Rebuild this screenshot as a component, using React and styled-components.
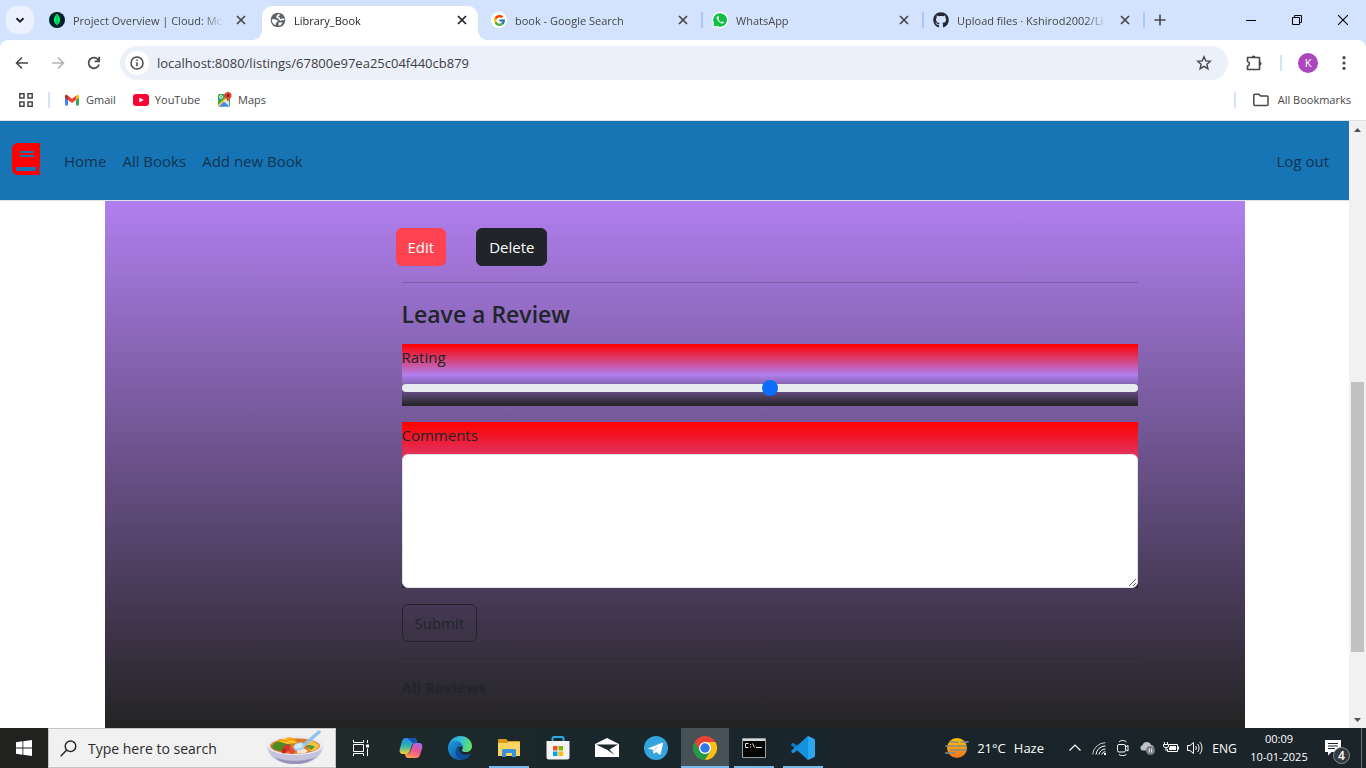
import React from "react";
import styled, { createGlobalStyle, css } from "styled-components";
import { FaBook, FaGithub } from "react-icons/fa";
import { FcGoogle } from "react-icons/fc";

const GlobalStyle = createGlobalStyle`
  * { box-sizing: border-box; }
  body { margin: 0; font-family: "Open Sans", "Noto Sans", sans-serif; color: #212529; }
  button, input, textarea { font: inherit; color: inherit; }
  button { border: 0; padding: 0; background: none; cursor: pointer; }
  a { color: inherit; text-decoration: none; }
  svg { display: block; flex: none; }
`;

/* ---------- window ---------- */
const Screen = styled.div`
  height: 100vh;
  min-height: 480px;
  display: flex;
  flex-direction: column;
  overflow: hidden;
`;

const TabStrip = styled.div`
  display: flex;
  height: 40px;
  flex: none;
  padding: 6px 0 0 6px;
  background: #d3e3fd;
`;

const TabSearch = styled.button`
  width: 28px;
  height: 28px;
  flex: none;
  margin-right: 7px;
  border-radius: 10px;
  background: #ebf1fe;
  display: grid;
  place-items: center;
`;

const TabItem = styled.div`
  position: relative;
  flex: 0 1 221px;
  min-width: 60px;
  display: flex;
  align-items: center;
  gap: 8px;
  height: 28px;
  padding: 0 13px 0 8px;
  font-size: 11px;
  color: #474747;
  ${(p) =>
    p.$divided &&
    css`
      &::after {
        content: "";
        position: absolute;
        right: 1px;
        width: 2px;
        height: 16px;
        background: #a8c7fa;
      }
    `}
  ${(p) =>
    p.$active &&
    css`
      height: 34px;
      color: #1f1f1f;
      padding-bottom: 6px;
      &::before {
        content: "";
        position: absolute;
        z-index: 0;
        inset: 0 5px 0 0;
        border-radius: 10px 10px 0 0;
        background: #fff;
      }
      &::after {
        content: "";
        position: absolute;
        left: -10px;
        right: -5px;
        bottom: 0;
        height: 10px;
        background: radial-gradient(circle at 0 0, transparent 10px, #fff 10px) left / 10px 10px no-repeat,
          radial-gradient(circle at 100% 0, transparent 10px, #fff 10px) right / 10px 10px no-repeat;
      }
      & > * {
        position: relative;
        z-index: 1;
      }
    `}
`;

const TabTitle = styled.span`
  flex: 1;
  min-width: 0;
  margin-top: 2px;
  overflow: hidden;
  white-space: nowrap;
  line-height: 18px;
  mask-image: linear-gradient(90deg, #000 calc(100% - 24px), transparent);
`;

const IconButton = styled.button`
  width: ${(p) => p.$w || 28}px;
  height: ${(p) => p.$h || 28}px;
  flex: none;
  display: grid;
  place-items: center;
`;

const WindowControls = styled.div`
  display: flex;
  margin-left: auto;
`;

const Rule = styled.span`
  width: 2px;
  height: 16px;
  background: #d3e3fd;
`;

const Toolbar = styled.div`
  flex: none;
  display: flex;
  align-items: center;
  height: 46px;
  padding: 0 8px;
  gap: 8px;
  background: linear-gradient(#d3e3fd 50%, #fff 50%);
  position: relative;
  isolation: isolate;
  &::before {
    content: "";
    position: absolute;
    z-index: -1;
    inset: 0;
    background: #fff;
    border-radius: 8px 8px 0 0;
  }
  & > ${Rule} {
    margin: 0 4px;
  }
`;

const Omnibox = styled.div`
  flex: 1;
  display: flex;
  align-items: center;
  height: 34px;
  margin: 0 4px;
  padding: 0 10px 0 5px;
  gap: 8px;
  border-radius: 17px;
  background: #ecf0fa;
`;

const SiteInfo = styled.button`
  width: 24px;
  height: 24px;
  border-radius: 50%;
  background: #fff;
  display: grid;
  place-items: center;
`;

const Address = styled.input`
  flex: 1;
  min-width: 0;
  border: 0;
  padding: 0;
  outline: 0;
  background: none;
  font-size: 13px;
  color: #3c4043;
`;

const Avatar = styled.span`
  width: 20px;
  height: 20px;
  border-radius: 50%;
  background: #ab47bc;
  color: #fff;
  font-size: 11px;
  line-height: 20px;
  text-align: center;
`;

const Bookmarks = styled.nav`
  flex: none;
  display: flex;
  align-items: center;
  height: 35px;
  padding: 0 15px 7px 18px;
  gap: 14px;
  border-bottom: 1px solid #dfe1e5;
  font-size: 11px;
  color: #474747;
`;

const Bookmark = styled.a`
  display: flex;
  align-items: center;
  gap: 6px;
  white-space: nowrap;
  & + & {
    margin-left: 3px;
  }
`;

const Push = styled.div`
  margin-left: auto;
  display: flex;
  align-items: center;
  gap: 16px;
  ${Bookmark} {
    gap: 8px;
  }
`;

/* ---------- web page ---------- */
const Viewport = styled.div`
  flex: 1;
  min-height: 0;
  display: flex;
`;

const Site = styled.div`
  flex: 1;
  min-width: 0;
  display: flex;
  flex-direction: column;
  overflow: hidden;
  font-size: 15px;
  line-height: 24px;
`;

const Navbar = styled.nav`
  flex: none;
  display: flex;
  align-items: center;
  gap: 16px;
  height: 80px;
  padding: 0 20px 0 10px;
  background: #1775b5;
  border-bottom: 1px solid #dee2e6;
`;

const Brand = styled.a`
  color: #f00;
  margin-right: 6px;
  padding-bottom: 4px;
`;

const NavLink = styled.a`
  color: #0f3450;
  padding-top: 1px;
  &:last-child {
    margin-left: auto;
  }
`;

const Container = styled.main`
  flex: 1;
  min-height: 0;
  width: 100%;
  max-width: 1140px;
  margin: 0 auto;
  overflow: hidden;
  background: linear-gradient(#b07fee, #232323);
`;

const Column = styled.div`
  width: 66.667%;
  margin-left: 25%;
  padding: 27px 12px 0;
`;

const Actions = styled.div`
  display: flex;
  gap: 30px;
  margin-left: -6px;
`;

const Button = styled.button`
  height: 38px;
  padding: 0 ${(p) => (p.$kind === "edit" ? 11 : 12)}px;
  border-radius: 6px;
  border: 1px solid #212529;
  ${(p) => p.$kind === "edit" && css`background: #ff424f; border-color: #ff424f; color: #fff;`}
  ${(p) => p.$kind === "dark" && css`background: #212529; color: #fff;`}
`;

const Separator = styled.hr`
  height: 1px;
  margin: 16px 0;
  border: 0;
  background: #212529;
  opacity: 0.25;
`;

const Heading = styled.h4`
  margin: 0 0 14px;
  font-size: 23px;
  line-height: 31px;
  font-weight: 600;
`;

const Field = styled.div`
  display: flex;
  flex-direction: column;
  gap: 6px;
  margin-bottom: 16px;
  padding-bottom: ${(p) => (p.$slider ? 6 : 0)}px;
  background: linear-gradient(#f00, #b07fee, #232323);
`;

const Label = styled.label`
  line-height: 26px;
`;

const Range = styled.input`
  appearance: none;
  width: 100%;
  height: 24px;
  margin: 0;
  background: none;
  &::-webkit-slider-runnable-track {
    height: 8px;
    border-radius: 8px;
    background: #e9ecef;
  }
  &::-webkit-slider-thumb {
    appearance: none;
    width: 16px;
    height: 16px;
    margin-top: -4px;
    border-radius: 50%;
    background: #0d6efd;
  }
`;

const TextArea = styled.textarea`
  width: 100%;
  height: 134px;
  padding: 6px 12px;
  border: 1px solid #dee2e6;
  border-radius: 6px;
  background: #fff;
  resize: vertical;
  outline: 0;
`;

const Reviews = styled.h5`
  margin: 0;
  font-size: 15px;
  line-height: 24px;
  font-weight: 700;
`;

const ScrollBar = styled.div`
  width: 17px;
  flex: none;
  display: flex;
  flex-direction: column;
  background: #f1f1f1;
`;

const ScrollTrack = styled.div`
  flex: 1;
  display: grid;
  grid-template-rows: 244fr 270fr 59fr;
  padding: 0 2px;
`;

const ScrollThumb = styled.div`
  grid-row: 2;
  background: #c1c1c1;
`;

/* ---------- taskbar ---------- */
const Taskbar = styled.footer`
  flex: none;
  display: flex;
  height: 40px;
  color: #fff;
  background: linear-gradient(90deg, #22211f 0, #1e2a29 25%, #19262b 50%, #19242a 75%, #1b2529);
`;

const SearchBox = styled.label`
  flex: 0 1 288px;
  min-width: 0;
  display: flex;
  align-items: center;
  gap: 11px;
  padding: 0 11px;
  border: 1px solid #c4c4c4;
  background: #f1f1f1;
  color: #222;
`;

const SearchInput = styled.input`
  flex: 1;
  min-width: 0;
  border: 0;
  padding: 0;
  background: none;
  outline: 0;
  font-size: 14px;
  &::placeholder {
    color: #2b2b2b;
    opacity: 1;
  }
`;

const TaskButtons = styled.div`
  display: flex;
  gap: 1px;
`;

const TaskButton = styled.button`
  width: ${(p) => p.$w || 48}px;
  display: grid;
  place-items: center;
  background: ${(p) => (p.$focused ? "#485256" : "none")};
  ${(p) =>
    p.$running &&
    css`
      background-image: linear-gradient(#76b9ed, #76b9ed);
      background-size: ${p.$focused ? "48px" : "40px"} 2px;
      background-position: bottom;
      background-repeat: no-repeat;
    `}
`;

const Tray = styled.div`
  margin-left: auto;
  display: flex;
  align-items: center;
  white-space: nowrap;
`;

const Weather = styled.button`
  display: flex;
  align-items: center;
  gap: 8px;
  margin-right: 19px;
  font-size: 13px;
`;

const Language = styled.button`
  width: 35px;
  font-size: 12px;
`;

const Clock = styled.time`
  display: flex;
  flex-direction: column;
  width: 72px;
  margin-left: 1px;
  font-size: 11px;
  line-height: 18px;
  text-align: center;
`;

const Notifications = styled.button`
  position: relative;
  width: 36px;
  height: 40px;
  display: grid;
  place-items: center;
`;

const Badge = styled.span`
  position: absolute;
  left: 18px;
  top: 19px;
  width: 17px;
  height: 17px;
  border: 1px solid #8a9094;
  border-radius: 50%;
  background: #33393c;
  font-size: 12px;
  font-weight: 600;
  line-height: 15px;
`;

const ShowDesktop = styled.button`
  align-self: stretch;
  width: 5px;
  margin-left: 10px;
  border-left: 1px solid #687074;
`;

/* ---------- icons ---------- */
const Line = ({ s = 16, d, w = 2, c = "currentColor", box = 16, cap = "butt" }) => (
  <svg width={s} height={s} viewBox={`0 0 ${box} ${box}`} fill="none" stroke={c} strokeWidth={w} strokeLinecap={cap}>
    <path d={d} />
  </svg>
);

const CloseIcon = () => <Line d="M4 4l8 8M12 4l-8 8" w={1.7} />;

const MongoIcon = () => (
  <svg width="16" height="16" viewBox="0 0 16 16">
    <circle cx="8" cy="8" r="8" fill="#001e2b" />
    <path d="M8 1.800C5.800 4 4.800 6 4.900 8.200 5 10.300 6.300 11.800 7.600 12.700L8 14.300l.4-1.600c1.300-.9 2.600-2.400 2.700-4.500C11.200 6 10.200 4 8 1.800z" fill="#00ed64" />
    <path d="M8 3v10" stroke="#00a35c" strokeWidth=".8" />
  </svg>
);

const GlobeIcon = () => (
  <svg width="16" height="16" viewBox="0 0 16 16">
    <circle cx="8" cy="8" r="7.300" fill="#5f6368" />
    <path d="M9.500 2.200c-.3 1-2.700 1.200-2.500 2.600.1.900 1.300.7 1.900 1.100.8.500.3 1.700 1.300 1.900 1.100.3 1.900-.8 3.200-.6l1 .3" fill="none" stroke="#fff" strokeWidth="1.600" />
    <path d="M1.800 7.300c2 .2 4-.2 5.300.6 1 .7.400 2-.5 2.400-.8.400-.9 1.400-.8 2.700l-1.600-.6C2.600 11.300 1.800 9.500 1.800 7.300z" fill="#fff" />
    <path d="M8.500 10.800l2.600-.6 1.400.9-2.300 2.300-1.700.2z" fill="#fff" />
  </svg>
);

const GoogleTile = styled.span`
  width: 16px;
  height: 16px;
  flex: none;
  border-radius: 50%;
  background: #fff;
  display: grid;
  place-items: center;
`;

const WhatsAppIcon = () => (
  <svg width="16" height="16" viewBox="0 0 16 16">
    <path d="M8 0a8 8 0 0 0-7 11.800L0 16l4.300-1A8 8 0 1 0 8 0z" fill="#fff" />
    <path d="M8 1.200a6.800 6.800 0 0 0-5.800 10.300l-.8 3 3.100-.8A6.800 6.800 0 1 0 8 1.200z" fill="#0fc143" />
    <path d="M5.500 4.200c-.9.500-1.200 1.700-.6 2.900 1 2.200 2.600 3.700 4.600 4.400 1 .3 2.200-.2 2.400-1.300l-1.800-1-.9 1C7.800 9.600 6.900 8.600 6.300 7.200l.8-.9-.7-2z" fill="#fff" />
  </svg>
);

const GmailIcon = () => (
  <svg width="16" height="16" viewBox="0 0 16 16">
    <path d="M1 4v8.500c0 .6.400 1 1 1h2V7z" fill="#4285f4" />
    <path d="M15 4v8.500c0 .6-.4 1-1 1h-2V7z" fill="#34a853" />
    <path d="M1 4.500v1.300L4 8V4L3.200 3C2.300 2.300 1 3 1 4.500z" fill="#c5221f" />
    <path d="M15 4.500v1.300L12 8V4l.8-1c.9-.7 2.200 0 2.200 1.500z" fill="#fbbc04" />
    <path d="M4 3.700v4.200l4 3 4-3V3.700l-4 3z" fill="#ea4335" />
  </svg>
);

const YouTubeIcon = () => (
  <svg width="16" height="12" viewBox="0 0 16 12">
    <rect width="16" height="12" rx="3" fill="#f03" />
    <path d="M6.300 3.400v5.200L10.800 6z" fill="#fff" />
  </svg>
);

const MapsIcon = () => (
  <svg width="15" height="16" viewBox="0 0 15 16">
    <rect x="1" y="2" width="12" height="12.500" rx="1.500" fill="#34a853" />
    <path d="M1 13.500L12 3v11H2z" fill="#e8eaed" />
    <path d="M2 14.500l5-5 5.500 5z" fill="#4285f4" />
    <path d="M1.300 13.500L12 3" stroke="#fbbc04" strokeWidth="1.500" />
    <circle cx="4" cy="5" r="1.400" fill="none" stroke="#fff" strokeWidth=".9" />
    <path d="M11 0a3.600 3.600 0 0 0-3.600 3.600C7.400 6.200 10.500 7 11 10.500 11.500 7 14.600 6.200 14.600 3.600A3.600 3.600 0 0 0 11 0z" fill="#ea4335" />
    <circle cx="11" cy="3.600" r="1.300" fill="#7b1510" />
  </svg>
);

const BowlIcon = () => (
  <svg width="58" height="36" viewBox="0 0 58 36">
    <path d="M1 15c1 11 9 19 28 19s27-8 28-19z" fill="#c5c2dc" />
    <path d="M9 27c4 5 11 7 20 7s16-2 20-7c-10 5-30 5-40 0z" fill="#9794b8" />
    <ellipse cx="29" cy="15.500" rx="28" ry="9.500" fill="#e9e8f5" />
    <ellipse cx="29" cy="16" rx="25" ry="7.800" fill="#dc7b25" />
    <path d="M6 17c2-6 8-7 14-6l5 4-9 6c-5 0-9-1-10-4z" fill="#4d8c23" />
    <path d="M11 11c3-4 7-1 9-3s6-1 9 1l2 4c-6 0-9 2-13 0z" fill="#fbc02d" />
    <path d="M12 11c4-3 6 2 10-1s6 1 8 1" fill="none" stroke="#f08a00" strokeWidth="1.200" />
    <path d="M39 12c4-3 11 0 14 3 0 4-5 6-9 6z" fill="#f6c343" />
    <path d="M40 16c3-2 7-1 9 1l-4 3z" fill="#549a2c" />
    <circle cx="21" cy="18" r="3.500" fill="#d9362b" />
    <circle cx="26" cy="21" r="3" fill="#e54b35" />
    <circle cx="18" cy="21" r="2.500" fill="#c6281f" />
    <path d="M31 20c3-3 8-2 11 1-3 3-8 3-11 2z" fill="#fbe3d2" />
    <path d="M53 2L38 15" stroke="#8fc3ec" strokeWidth="3.500" strokeLinecap="round" />
    <ellipse cx="33" cy="16.500" rx="6" ry="4" transform="rotate(-18 33 16.500)" fill="#a9d0f0" />
    <ellipse cx="32.500" cy="16" rx="4" ry="2.300" transform="rotate(-18 32.500 16)" fill="#d6eafa" />
  </svg>
);

const WindowsIcon = () => (
  <svg width="16" height="16" viewBox="0 0 16 16" fill="#fff">
    <path d="M0 2.200l6.500-.9v6.200H0zM7.300 1.200L16 0v7.500H7.300zM0 8.400h6.500v6.300L0 13.800zM7.300 8.400H16V16l-8.700-1.200z" />
  </svg>
);

const TaskViewIcon = () => (
  <svg width="18" height="16" viewBox="0 0 18 16" fill="none" stroke="#fff">
    <path d="M1.500 0v2.500h10V0M1.500 16v-2.500h10V16M1.500 4.500h10v7h-10zM15.500 0v3M15.500 8.500V16" />
    <path d="M14 4.500h3v3h-3z" fill="#fff" stroke="none" />
  </svg>
);

const CopilotIcon = () => (
  <svg width="24" height="24" viewBox="0 0 24 24">
    <defs>
      <linearGradient id="cpA" x1="0" y1="0" x2="0" y2="1">
        <stop offset="0" stopColor="#1d8bea" />
        <stop offset=".5" stopColor="#2fb5b0" />
        <stop offset="1" stopColor="#f5cf2e" />
      </linearGradient>
      <linearGradient id="cpB" x1=".7" y1="0" x2=".3" y2="1">
        <stop offset="0" stopColor="#a964e8" />
        <stop offset=".5" stopColor="#f0568e" />
        <stop offset="1" stopColor="#ff9a48" />
      </linearGradient>
    </defs>
    <path d="M7 2h8c1.800 0 2.300 1.200 2.800 3l.7 2h-2.600c-1.800 0-2.600.8-3.200 2.700l-1.700 5C10.300 16.800 9.400 18 7.400 18H4c-3 0-3.800-2.300-3.200-5L3 5c.6-2 1.900-3 4-3z" fill="url(#cpA)" />
    <path d="M8.500 2H15c1.800 0 2.300 1.200 2.800 3l.7 2h-5z" fill="#1652b8" />
    <path d="M17 22H9c-1.800 0-2.300-1.200-2.800-3l-.4-1h2.500c1.800 0 2.600-.8 3.200-2.700l1.700-5C13.900 8.200 14.600 7 16.600 7H20c3 0 3.800 2.300 3.200 5L21 19c-.6 2-1.900 3-4 3z" fill="url(#cpB)" />
  </svg>
);

const EdgeIcon = () => (
  <svg width="24" height="24" viewBox="0 0 24 24">
    <defs>
      <linearGradient id="edA" x1="0" y1=".3" x2="1" y2=".5">
        <stop offset="0" stopColor="#2499df" />
        <stop offset=".5" stopColor="#35c1d8" />
        <stop offset="1" stopColor="#68e060" />
      </linearGradient>
      <linearGradient id="edB" x1="0" y1="0" x2="1" y2="1">
        <stop offset="0" stopColor="#1b9de2" />
        <stop offset="1" stopColor="#0b4f9c" />
      </linearGradient>
    </defs>
    <path d="M0 12C.5 5 5.500 0 12.200 0 19 0 24 4.500 24 10.200c0 3.800-2.900 5.900-6 5.900-3 0-4.200-1-4.200-1.600 0-.6 1-1 1-2.900C14.800 8.500 11.800 6 8 6c-4 0-7 2.500-8 6z" fill="url(#edA)" />
    <path d="M0 12c0-4 3.800-7 8-7 4.200 0 6.800 3 6.800 6.300C12 9.500 7.800 10.800 7.800 15.500c0 4.500 3.700 8 8.200 8-1.200.4-2.600.5-4 .5C5 24 0 18.500 0 12z" fill="url(#edB)" />
    <path d="M7.800 15.500c0-2.500 1.500-4.200 3.400-4.700-1 3.700 1.500 8 6.300 8 2.500 0 4-.9 4.700-.9.500 0 .5.500.2.900-1.500 2.300-3.700 4-6.400 4.700-4.500 0-8.200-3.500-8.200-8z" fill="#104d99" />
  </svg>
);

const FolderAppIcon = () => (
  <svg width="22" height="18" viewBox="0 0 22 18">
    <path d="M0 1c0-.6.400-1 1-1h7l2 2h11c.6 0 1 .4 1 1v5H0z" fill="#d79a19" />
    <path d="M0 4h9l2-1h10c.6 0 1 .4 1 1v13H0z" fill="#fcd462" />
    <path d="M4 18v-6.500c0-.8.600-1.500 1.500-1.500h11c.9 0 1.500.7 1.500 1.500V18h-4v-4H8v4z" fill="#3992dc" />
  </svg>
);

const StoreIcon = () => (
  <svg width="24" height="24" viewBox="0 0 24 24">
    <path d="M6.500 6V2.500C6.500 1.700 7.200 1 8 1h8c.8 0 1.500.7 1.500 1.500V6" fill="none" stroke="#29a9e8" strokeWidth="2" />
    <path d="M.5 5h23v16a2.500 2.500 0 0 1-2.500 2.500H3A2.500 2.500 0 0 1 .5 21z" fill="#f2f3f5" />
    <path d="M7 10h4.500v4.500H7z" fill="#f25022" />
    <path d="M12.500 10H17v4.500h-4.500z" fill="#7fba00" />
    <path d="M7 15.500h4.500V20H7z" fill="#00a4ef" />
    <path d="M12.500 15.500H17V20h-4.500z" fill="#ffb900" />
  </svg>
);

const MailIcon = () => (
  <svg width="24" height="20" viewBox="0 0 24 20">
    <path d="M0 6l12-6 12 6v13H0z" fill="#fff" />
    <path d="M1 6.500h22l-8.500 5 5 5.500L12.500 12z" fill="#1b272b" />
  </svg>
);

const TelegramIcon = () => (
  <svg width="24" height="24" viewBox="0 0 24 24">
    <circle cx="12" cy="12" r="12" fill="#34a4df" />
    <path d="M4.500 12.200L18 6.800c.7-.3 1.200.1 1 1l-2.200 10c-.2.800-.7 1-1.300.6l-3.400-2.500-1.700 1.700c-.4.300-.8.200-.9-.3l-1-3.600-3.900-1c-.6-.1-.6-.3-.1-.5z" fill="#fff" />
    <path d="M9 13.500l7-4.500-5.500 5.500-.3 2.500z" fill="#b9dbee" />
  </svg>
);

const ChromeIcon = () => (
  <svg width="24" height="24" viewBox="0 0 24 24">
    <path d="M12 12L1.600 6A12 12 0 0 1 22.400 6z" fill="#ea4335" />
    <path d="M12 12L1.600 6A12 12 0 0 0 12 24l5.200-9z" fill="#249a48" />
    <path d="M12 6h10.400A12 12 0 0 1 12 24l5.200-9z" fill="#fbc116" />
    <path d="M12 6H1.600L6.800 15 12 12z" fill="#ea4335" />
    <path d="M1.600 6L6.800 15 12 18l-4 3z" fill="#249a48" />
    <circle cx="12" cy="12" r="6" fill="#fff" />
    <circle cx="12" cy="12" r="4.700" fill="#2f78ee" />
  </svg>
);

const TerminalIcon = () => (
  <svg width="24" height="20" viewBox="0 0 24 20">
    <path d="M.5.500h23v19H.5z" fill="#050505" stroke="#9a9fa3" />
    <path d="M1 1h22v2H1z" fill="#d5d7d9" />
    <path d="M6.500 5.500h-3v4h3M8.500 6v1M8.500 8.500v1M10.500 5.500l2 4M14 9.500h6" fill="none" stroke="#e2e2e2" />
  </svg>
);

const CodeIcon = () => (
  <svg width="24" height="24" viewBox="0 0 24 24">
    <path d="M17 0L6.500 10 2.300 6.700.300 7.700v1.500L17 24V17.500z" fill="#0b79c4" />
    <path d="M17 24L6.500 14l-4.200 3.300-2-1v-1.500L17 0v6.500z" fill="#1390de" />
    <path d="M17 0l6 2.800c.6.300 1 .8 1 1.500v15.400c0 .7-.4 1.200-1 1.500L17 24z" fill="#2ba7f2" />
  </svg>
);

const HazeIcon = () => (
  <svg width="24" height="22" viewBox="0 0 24 22">
    <defs>
      <linearGradient id="hz" x1="0" y1="0" x2="0" y2="1">
        <stop offset="0" stopColor="#ffc700" />
        <stop offset="1" stopColor="#f4711f" />
      </linearGradient>
    </defs>
    <circle cx="12" cy="11" r="10" fill="url(#hz)" />
    <path d="M5 5h8M16 5h7M1 9h9M12 9h9M6 13h15M0 16h10" stroke="#7d8a91" strokeWidth="1.700" strokeLinecap="round" />
  </svg>
);

const WifiIcon = () => (
  <svg width="14" height="14" viewBox="0 0 14 14" fill="none" stroke="#fff">
    <path d="M.7 13.500A12.800 12.800 0 0 1 13.500 1.700" opacity=".75" />
    <path d="M4 13.500a9.500 9.500 0 0 1 9.500-8.600M7 13.500A6.500 6.500 0 0 1 13.500 8M9.700 13.500a3.800 3.800 0 0 1 3.800-2.800" />
    <path d="M12 12h2v2h-2z" fill="#fff" stroke="none" />
  </svg>
);

const MeetIcon = () => (
  <svg width="14" height="16" viewBox="0 0 14 16" fill="none" stroke="#fff">
    <rect x="1.500" y="4.500" width="8" height="7.500" rx="1.500" />
    <path d="M9.500 7l2.500-1.500v5.500L9.500 9.500M3 2C5 0 8.500 0 10.500 2M3 14.500c2 1.500 5.500 1.500 7.500 0" />
  </svg>
);

const CloudIcon = () => (
  <svg width="16" height="14" viewBox="0 0 16 14">
    <path d="M3 9.500A3 3 0 0 1 3.500 4 4.500 4.500 0 0 1 12 4c2 0 3 1.500 3 3v2.500z" fill="#bfc3c5" />
    <circle cx="11.500" cy="9.500" r="4.500" fill="#777c7f" />
    <path d="M10.300 7.500v4M12.700 7.500v4" stroke="#fff" />
  </svg>
);

const BatteryIcon = () => (
  <svg width="16" height="12" viewBox="0 0 16 12">
    <path d="M6 2.500h8.500v7H4.500V7M15.500 4.500v3" fill="none" stroke="#fff" />
    <path d="M7 4h6v4H6V6z" fill="#fff" />
    <path d="M1.500 0v2M4.500 0v2M.5 2.500h5v2L4 5.500H2L.5 4.500zM3 5.500V9" fill="none" stroke="#fff" />
  </svg>
);

const VolumeIcon = () => (
  <svg width="17" height="14" viewBox="0 0 17 14" fill="none" stroke="#fff">
    <path d="M.5 4.500H3L6.500 1.500v11L3 9.500H.5zM8.500 5c1 1 1 3 0 4M10.500 3c2 2 2 6 0 8M12.700 1c3 3.500 3 8.500 0 12" />
  </svg>
);

const MessageIcon = () => (
  <svg width="16" height="16" viewBox="0 0 16 16">
    <path d="M0 0h16v12H6.500L3 15.500V12H0z" fill="#fff" />
    <path d="M3 3.500h10M3 6h10M3 8.500h7" stroke="#1b2529" />
  </svg>
);

/* ---------- data ---------- */
const TABS = [
  { title: "Project Overview | Cloud: Mc", icon: <MongoIcon /> },
  { title: "Library_Book", icon: <GlobeIcon />, active: true },
  { title: "book - Google Search", icon: <GoogleTile><FcGoogle size={13} /></GoogleTile>, divided: true },
  { title: "WhatsApp", icon: <WhatsAppIcon />, divided: true },
  { title: "Upload files · Kshirod2002/Li", icon: <FaGithub size={16} color="#24292f" />, divided: true },
];

const APPS = [
  { name: "Copilot", icon: <CopilotIcon /> },
  { name: "Edge", icon: <EdgeIcon /> },
  { name: "File Explorer", icon: <FolderAppIcon />, running: true },
  { name: "Store", icon: <StoreIcon /> },
  { name: "Mail", icon: <MailIcon /> },
  { name: "Telegram", icon: <TelegramIcon /> },
  { name: "Chrome", icon: <ChromeIcon />, running: true, focused: true },
  { name: "Command Prompt", icon: <TerminalIcon />, running: true },
  { name: "Visual Studio Code", icon: <CodeIcon />, running: true },
];

function Browser() {
  return (
    <>
      <TabStrip>
        <TabSearch aria-label="Search tabs"><Line s={12} box={12} d="M2.500 4.200L6 7.700l3.500-3.500" /></TabSearch>
        {TABS.map((t) => (
          <TabItem key={t.title} $active={t.active} $divided={t.divided}>
            {t.icon}
            <TabTitle>{t.title}</TabTitle>
            <IconButton $w={16} $h={16} aria-label="Close tab"><CloseIcon /></IconButton>
          </TabItem>
        ))}
        <IconButton aria-label="New tab"><Line d="M8 2.500v11M2.500 8h11" w={1.600} c="#474747" /></IconButton>
        <WindowControls>
          <IconButton $w={46} aria-label="Minimize"><Line s={10} box={10} d="M0 5.500h10" w={1} c="#000" /></IconButton>
          <IconButton $w={46} aria-label="Restore"><Line s={10} box={10} d="M.5 2.500h7v7h-7zM2.500 2.500v-2h7v7h-2" w={1} c="#000" /></IconButton>
          <IconButton $w={46} aria-label="Close"><Line s={10} box={10} d="M0 0l10 10M10 0L0 10" w={1.100} c="#000" /></IconButton>
        </WindowControls>
      </TabStrip>

      <Toolbar>
        <IconButton aria-label="Back"><Line d="M14 8H3M8 2.500L2.500 8 8 13.500" w={1.600} c="#474747" /></IconButton>
        <IconButton aria-label="Forward"><Line d="M2 8h11M8 2.500L13.500 8 8 13.500" w={1.600} c="#b4b4b4" /></IconButton>
        <IconButton aria-label="Reload"><Line d="M13 9.500A5.300 5.300 0 1 1 12.300 5M13.200 1.800v4.500H8.700" w={1.700} c="#474747" /></IconButton>
        <Omnibox>
          <SiteInfo aria-label="Site information">
            <svg width="14" height="14" viewBox="0 0 14 14" fill="none" stroke="#474747" strokeWidth="1.500">
              <circle cx="7" cy="7" r="6" />
              <path d="M7 6.200v4M7 3.600v1.500" />
            </svg>
          </SiteInfo>
          <Address aria-label="Address" defaultValue="localhost:8080/listings/67800e97ea25c04f440cb879" />
          <IconButton aria-label="Bookmark">
            <Line d="M8 1.800l1.800 4.100 4.500.4-3.400 3 1 4.400L8 11.400l-3.900 2.300 1-4.400-3.400-3 4.500-.4z" w={1.400} c="#474747" />
          </IconButton>
        </Omnibox>
        <IconButton aria-label="Extensions">
          <svg width="18" height="18" viewBox="0 0 18 18">
            <path d="M2.500 3.500h12v12h-12v-3.500c2.500-.5 2.500-4 0-4.500z" fill="none" stroke="#474747" strokeWidth="1.600" strokeLinejoin="round" />
            <path d="M6.500 3.500a2 2 0 0 1 4 0zM14.500 7.500a2 2 0 0 1 0 4z" fill="#474747" />
          </svg>
        </IconButton>
        <Rule />
        <IconButton aria-label="Profile"><Avatar>K</Avatar></IconButton>
        <IconButton aria-label="Menu">
          <svg width="16" height="16" viewBox="0 0 16 16" fill="#474747">
            <circle cx="8" cy="2.700" r="1.600" /><circle cx="8" cy="8" r="1.600" /><circle cx="8" cy="13.300" r="1.600" />
          </svg>
        </IconButton>
      </Toolbar>

      <Bookmarks>
        <IconButton $w={16} $h={16} aria-label="Apps">
          <Line d="M1.800 1.800h4.200v4.200H1.800zM10 1.800h4.200v4.200H10zM1.800 10h4.200v4.200H1.800zM10 10h4.200v4.200H10z" w={1.500} />
        </IconButton>
        <Rule />
        <Bookmark href="#gmail"><GmailIcon />Gmail</Bookmark>
        <Bookmark href="#youtube"><YouTubeIcon />YouTube</Bookmark>
        <Bookmark href="#maps"><MapsIcon />Maps</Bookmark>
        <Push>
          <Rule />
          <Bookmark href="#all">
            <Line s={18} box={18} d="M1.800 4.200c0-.6.400-1 1-1h4L8.500 5H15c.6 0 1 .4 1 1v7.500c0 .6-.4 1-1 1H2.800c-.6 0-1-.4-1-1z" w={1.500} />
            All Bookmarks
          </Bookmark>
        </Push>
      </Bookmarks>
    </>
  );
}

function ListingPage() {
  return (
    <Site>
      <Navbar>
        <Brand href="#home" aria-label="Library"><FaBook size={32} /></Brand>
        <NavLink href="#home">Home</NavLink>
        <NavLink href="#books">All Books</NavLink>
        <NavLink href="#new">Add new Book</NavLink>
        <NavLink href="#logout">Log out</NavLink>
      </Navbar>
      <Container>
        <Column>
          <Actions>
            <Button $kind="edit">Edit</Button>
            <Button $kind="dark">Delete</Button>
          </Actions>
          <Separator />
          <Heading>Leave a Review</Heading>
          <Field $slider>
            <Label htmlFor="rating">Rating</Label>
            <Range id="rating" type="range" min="1" max="5" defaultValue="3" />
          </Field>
          <Field>
            <Label htmlFor="comments">Comments</Label>
            <TextArea id="comments" />
          </Field>
          <Button>Submit</Button>
          <Separator />
          <Reviews>All Reviews</Reviews>
        </Column>
      </Container>
    </Site>
  );
}

function WindowsTaskbar() {
  return (
    <Taskbar>
      <TaskButton aria-label="Start"><WindowsIcon /></TaskButton>
      <SearchBox>
        <svg width="17" height="17" viewBox="0 0 17 17" fill="none" stroke="#222" strokeWidth="1.400">
          <circle cx="10.500" cy="6.300" r="5.300" />
          <path d="M6.700 10L.7 16.200" />
        </svg>
        <SearchInput aria-label="Search" placeholder="Type here to search" />
        <BowlIcon />
      </SearchBox>
      <TaskButtons>
        <TaskButton $w={50} aria-label="Task view"><TaskViewIcon /></TaskButton>
        {APPS.map((a) => (
          <TaskButton key={a.name} aria-label={a.name} $running={a.running} $focused={a.focused}>{a.icon}</TaskButton>
        ))}
      </TaskButtons>
      <Tray>
        <Weather><HazeIcon /><span>21°C</span><span>Haze</span></Weather>
        <IconButton $w={24} aria-label="Hidden icons"><Line s={12} box={12} d="M.5 8.500L6 3l5.500 5.500" w={1.200} /></IconButton>
        <IconButton $w={24} aria-label="Network"><WifiIcon /></IconButton>
        <IconButton $w={24} aria-label="Meet now"><MeetIcon /></IconButton>
        <IconButton $w={24} aria-label="OneDrive"><CloudIcon /></IconButton>
        <IconButton $w={24} aria-label="Battery"><BatteryIcon /></IconButton>
        <IconButton $w={24} aria-label="Volume"><VolumeIcon /></IconButton>
        <Language>ENG</Language>
        <Clock><span>00:09</span><span>10-01-2025</span></Clock>
        <Notifications aria-label="Notifications"><MessageIcon /><Badge>4</Badge></Notifications>
        <ShowDesktop aria-label="Show desktop" />
      </Tray>
    </Taskbar>
  );
}

export default function App() {
  return (
    <>
      <GlobalStyle />
      <Screen>
        <Browser />
        <Viewport>
          <ListingPage />
          <ScrollBar>
            <IconButton $w={17} $h={17} aria-label="Scroll up"><svg width="7" height="4" viewBox="0 0 7 4"><path d="M3.500 0L7 4H0z" fill="#505050" /></svg></IconButton>
            <ScrollTrack><ScrollThumb /></ScrollTrack>
            <IconButton $w={17} $h={17} aria-label="Scroll down"><svg width="7" height="4" viewBox="0 0 7 4"><path d="M0 0h7L3.500 4z" fill="#505050" /></svg></IconButton>
          </ScrollBar>
        </Viewport>
        <WindowsTaskbar />
      </Screen>
    </>
  );
}
